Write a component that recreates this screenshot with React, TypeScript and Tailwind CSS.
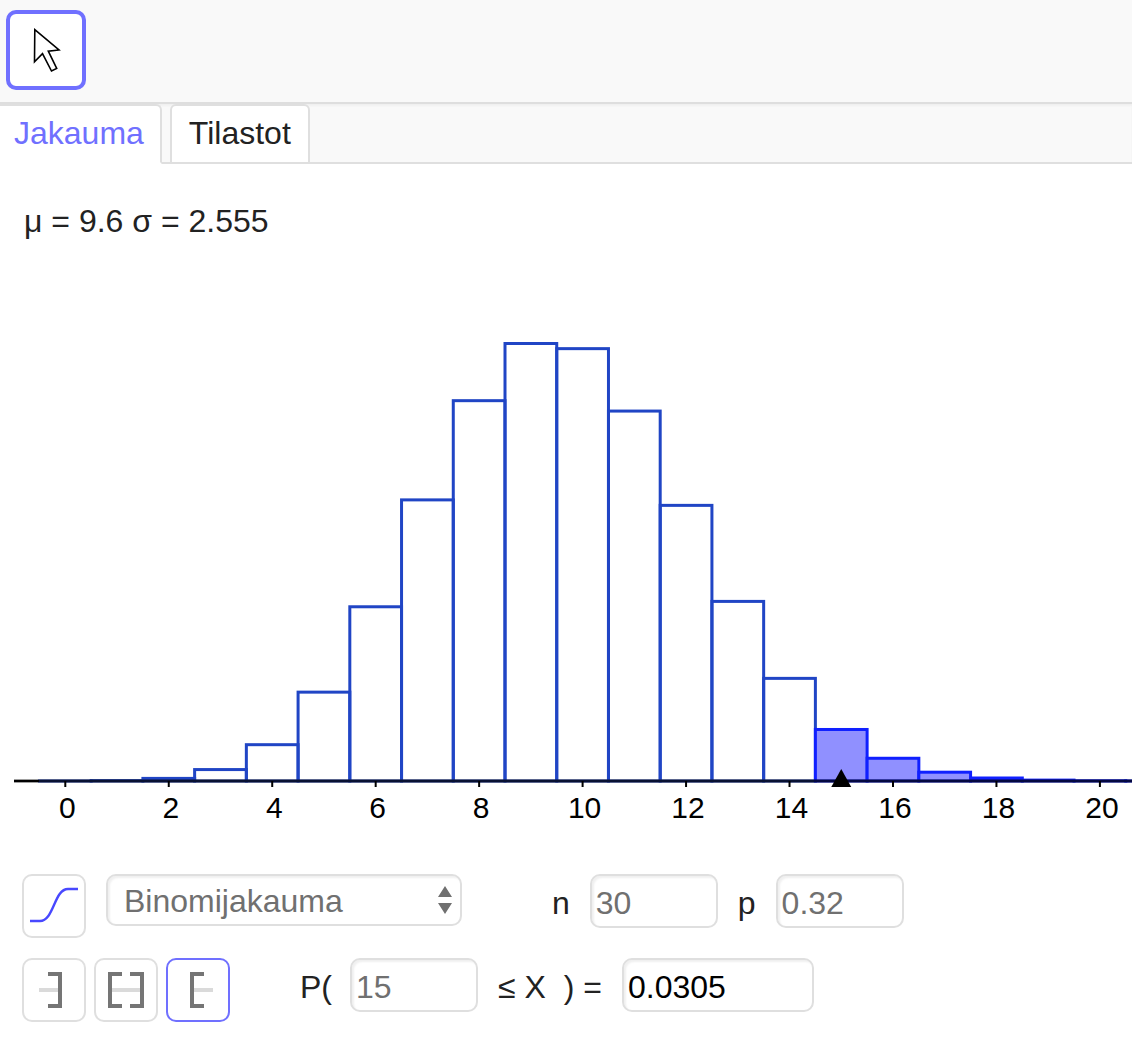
import { useState } from 'react';
import type { ReactNode } from 'react';

const N = 30;
const P = 0.32;
const FROM = 15;

// plot geometry
const X0 = 65.3;
const STEP = 51.73;
const BASE = 541;
const PEAK = 437.5;

const binomialPmf = (n: number, p: number) => {
  const values = [Math.pow(1 - p, n)];
  for (let k = 1; k <= n; k++) {
    values.push((values[k - 1] * (n - k + 1) * p) / (k * (1 - p)));
  }
  return values;
};

const fieldClass =
  'h-[54px] rounded-[10px] border-2 border-[#dfdfdf] bg-white px-1 pt-1 shadow-[inset_2px_2px_2px_#f0f0f0] outline-none';

const Histogram = () => {
  const pmf = binomialPmf(N, P);
  const max = Math.max(...pmf);
  const bars = pmf.slice(0, 22).map((value, k) => ({
    k,
    x: X0 + (k - 0.5) * STEP,
    height: (value / max) * PEAK,
  }));
  const ticks = [0, 2, 4, 6, 8, 10, 12, 14, 16, 18, 20];
  const markerX = X0 + FROM * STEP;

  return (
    <svg
      viewBox="0 0 1132 634"
      className="block h-auto w-full"
      role="img"
      aria-label="Binomijakauma"
    >
      {bars.map((bar) => (
        <rect
          key={bar.k}
          x={bar.x}
          y={BASE - bar.height}
          width={STEP}
          height={bar.height}
          fill={bar.k >= FROM ? '#9090ff' : 'none'}
          stroke={bar.k >= FROM ? '#1020ff' : '#2045c5'}
          strokeWidth={3}
        />
      ))}
      <path d={`M14 ${BASE}H1132`} stroke="#000" strokeOpacity={0.75} strokeWidth={3} />
      <path d={`M14 ${BASE}H39`} stroke="#000" strokeWidth={2} />
      {ticks.map((tick) => (
        <g key={tick}>
          <path d={`M${X0 + tick * STEP} ${BASE}v6`} stroke="#000" strokeWidth={2} />
          <text
            x={X0 + tick * STEP + 2}
            y={578}
            textAnchor="middle"
            className="text-[30px]"
          >
            {tick}
          </text>
        </g>
      ))}
      <path d={`M${markerX} ${BASE - 12}l10 18h-20z`} />
    </svg>
  );
};

interface IconButtonProps {
  label: string;
  selected?: boolean;
  onClick?: () => void;
  children: ReactNode;
}

const IconButton = ({ label, selected, onClick, children }: IconButtonProps) => (
  <button
    type="button"
    aria-label={label}
    aria-pressed={selected}
    onClick={onClick}
    className={`size-16 shrink-0 rounded-[10px] border-2 bg-white ${
      selected ? 'border-[#7070ff]' : 'border-[#dfdfdf]'
    }`}
  >
    <svg viewBox="0 0 60 60" className="size-[60px]" fill="none">
      {children}
    </svg>
  </button>
);

const intervals = [
  { id: 'left', label: 'Vasen', line: 'M15 30H34', bracket: 'M24 14H36V46H24' },
  {
    id: 'between',
    label: 'Väli',
    line: 'M16 30H44',
    bracket: 'M26 14H14V46H26M34 14H46V46H34',
  },
  { id: 'right', label: 'Oikea', line: 'M26 30H45', bracket: 'M36 14H24V46H36' },
];

export default function App() {
  const [interval, setInterval] = useState('right');
  const [cumulative, setCumulative] = useState(false);

  return (
    <div className="min-h-screen bg-white font-['Liberation_Sans',Arial,sans-serif] text-[32px] leading-9 text-[#222]">
      <header className="border-b-2 border-[#dedede] bg-[#f9f9f9] px-1.5 pt-2.5 pb-3">
        <button
          type="button"
          aria-label="Siirrä"
          className="block size-20 rounded-[10px] border-4 border-[#7070ff] bg-white"
        >
          <svg viewBox="0 0 72 72" className="size-[72px]" fill="none">
            <path
              d="M24.8 15.6L49 36L38.3 37.2L46.7 54.5L41.5 57L32.5 39.6L24.5 47.8z"
              stroke="#000"
              strokeWidth="1.6"
            />
          </svg>
        </button>
      </header>

      <div
        role="tablist"
        className="flex gap-2 border-b-2 border-[#dfdfdf] bg-[#f9f9f9] shadow-[inset_0_2px_2px_#f0f0f0]"
      >
        <button
          type="button"
          role="tab"
          aria-selected="true"
          className="-mb-0.5 rounded-tr-md border-2 border-l-0 border-[#dfdfdf] border-b-white bg-white pt-[9px] pr-4 pb-[11px] pl-3.5 text-[#7070ff]"
        >
          Jakauma
        </button>
        <button
          type="button"
          role="tab"
          aria-selected="false"
          className="-mb-0.5 rounded-t-md border-2 border-[#dfdfdf] bg-white px-[17px] pt-[9px] pb-[11px]"
        >
          Tilastot
        </button>
      </div>

      <main>
        <p className="px-6 pt-[39px] pb-px">μ = 9.6 σ = 2.555</p>
        <Histogram />

        <div className="flex flex-col gap-5 px-[22px] pb-[30px]">
          <div className="flex items-start">
            <IconButton
              label="Kertymäfunktio"
              selected={cumulative}
              onClick={() => setCumulative(!cumulative)}
            >
              <path
                d="M6 45H16C30 45 30 13 44 13H54"
                stroke="#4848ff"
                strokeWidth="2.4"
              />
            </IconButton>
            <div className="relative ml-5">
              <select
                aria-label="Jakauma"
                className="block h-[52px] w-[356px] appearance-none rounded-[10px] border-2 border-[#dfdfdf] bg-white px-4 pt-0.5 text-[#707070] shadow-[inset_2px_2px_2px_#f0f0f0] outline-none"
              >
                <option>Binomijakauma</option>
              </select>
              <svg
                viewBox="0 0 14 28"
                className="pointer-events-none absolute top-3 right-2.5 h-7 w-3.5"
                fill="#707070"
              >
                <path d="M7 0l7 11H0zM7 28l7-11H0z" />
              </svg>
            </div>
            <label htmlFor="n" className="ml-[90px] leading-[58px]">
              n
            </label>
            <input
              id="n"
              defaultValue="30"
              className={`${fieldClass} ml-5 w-32 text-[#707070]`}
            />
            <label htmlFor="p" className="ml-5 leading-[58px]">
              p
            </label>
            <input
              id="p"
              defaultValue="0.32"
              className={`${fieldClass} ml-5 w-32 text-[#707070]`}
            />
          </div>

          <div className="flex items-start">
            <div className="flex gap-2">
              {intervals.map((item) => (
                <IconButton
                  key={item.id}
                  label={item.label}
                  selected={interval === item.id}
                  onClick={() => setInterval(item.id)}
                >
                  <path d={item.line} stroke="#dadada" strokeWidth="4" />
                  <path d={item.bracket} stroke="#757575" strokeWidth="4" />
                </IconButton>
              ))}
            </div>
            <label htmlFor="low" className="ml-[70px] leading-[58px]">
              P(
            </label>
            <input
              id="low"
              defaultValue="15"
              className={`${fieldClass} ml-[18px] w-32 text-[#707070]`}
            />
            <span className="ml-5 leading-[58px]">≤ X</span>
            <label htmlFor="result" className="ml-[18px] leading-[58px]">
              ) =
            </label>
            <input
              id="result"
              readOnly
              value="0.0305"
              className={`${fieldClass} ml-5 w-48 text-black`}
            />
          </div>
        </div>
      </main>
    </div>
  );
}
